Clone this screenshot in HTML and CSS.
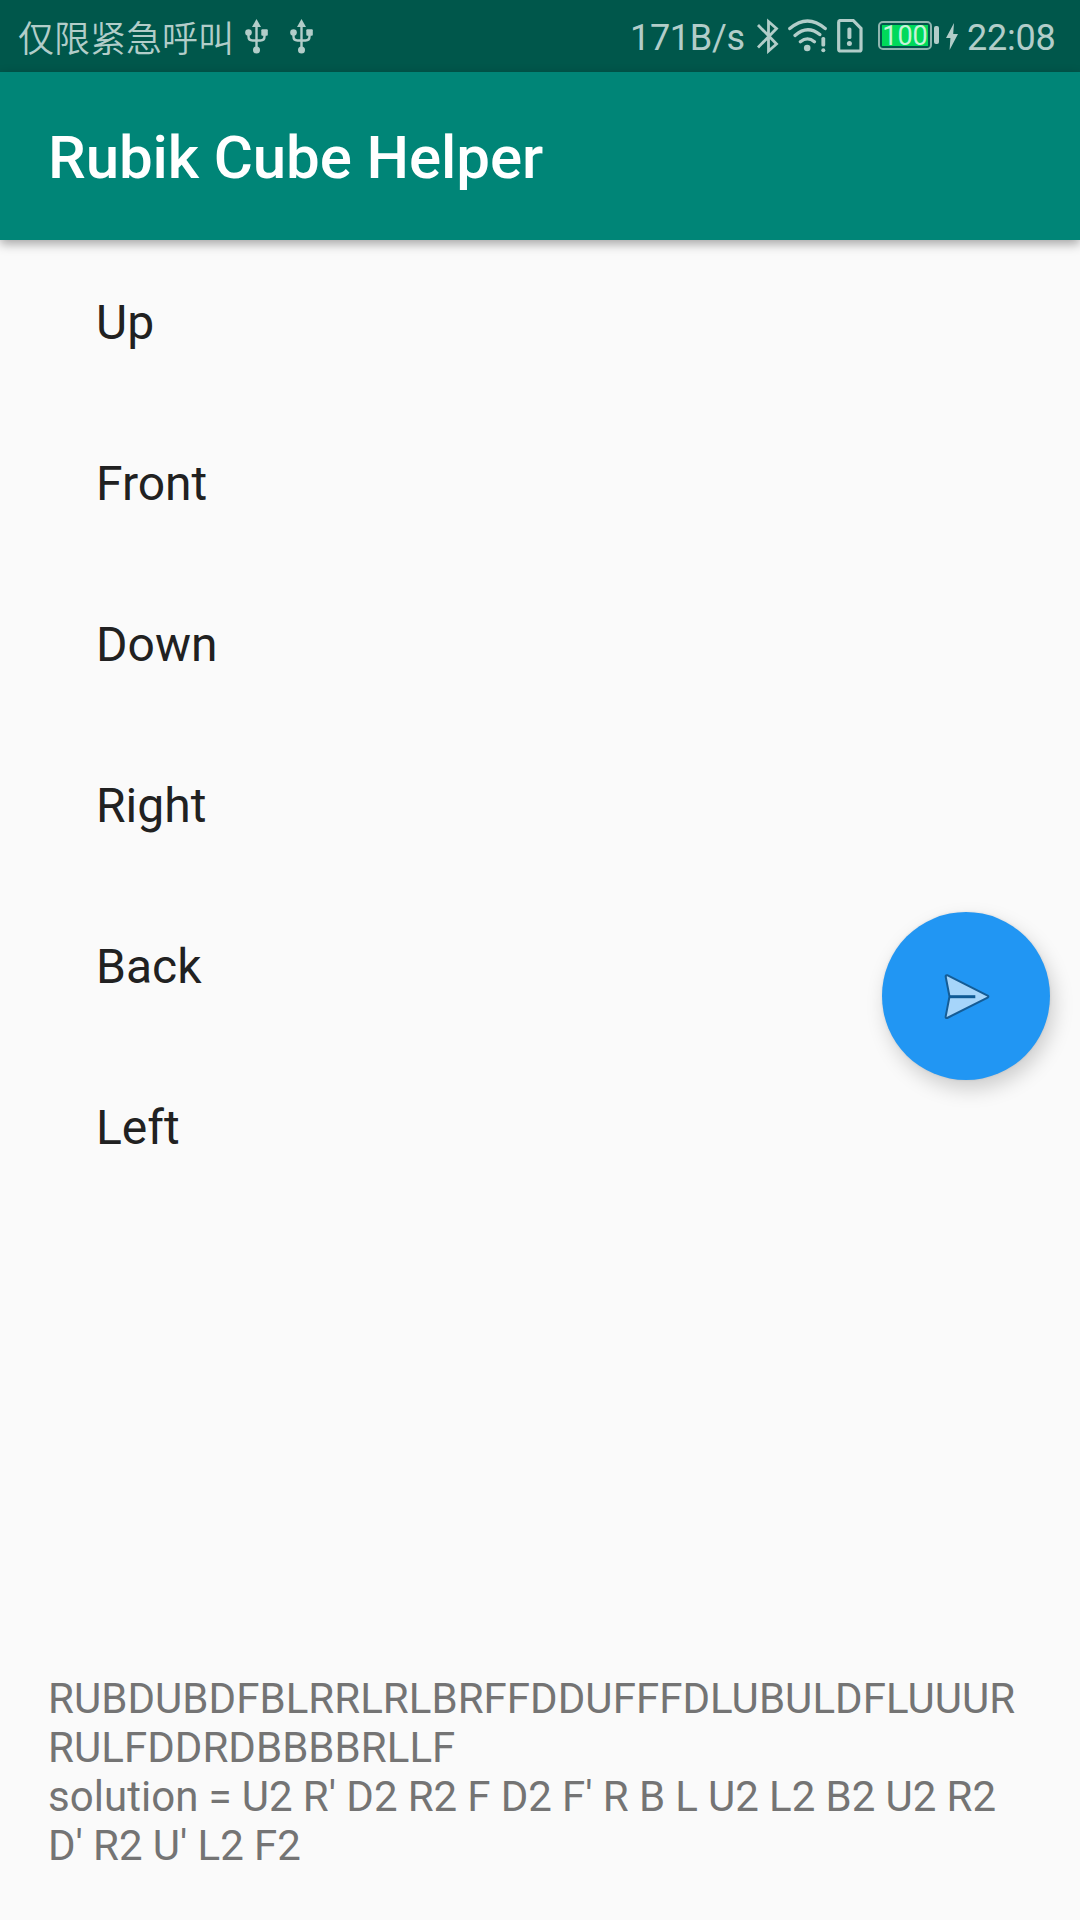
FILE: index.html
```html
<!DOCTYPE html>
<html lang="en">
<head>
<meta charset="utf-8">
<title>Rubik Cube Helper</title>
<link rel="stylesheet" href="styles.css">
</head>
<body>
<div class="screen">
  <div class="status-bar">
    <div class="status-left">
      <span class="carrier" lang="zh-CN">仅限紧急呼叫</span>
      <svg class="icon-usb" width="23" height="35" viewBox="0 0 23 35">
        <path d="M11.5 5v26M3.5 13v4.5q0 4 4 4h8q4 0 4-4V13" fill="none" stroke="currentColor" stroke-width="2.4"/>
        <path d="M11.5 0l4.5 8H7z"/>
        <circle cx="3.5" cy="13.5" r="3.3"/>
        <rect x="16.3" y="10.2" width="6.5" height="6.5" rx="1"/>
        <circle cx="11.5" cy="31" r="3.5"/>
      </svg>
      <svg class="icon-usb" width="23" height="35" viewBox="0 0 23 35">
        <path d="M11.5 5v26M3.5 13v4.5q0 4 4 4h8q4 0 4-4V13" fill="none" stroke="currentColor" stroke-width="2.4"/>
        <path d="M11.5 0l4.5 8H7z"/>
        <circle cx="3.5" cy="13.5" r="3.3"/>
        <rect x="16.3" y="10.2" width="6.5" height="6.5" rx="1"/>
        <circle cx="11.5" cy="31" r="3.5"/>
      </svg>
    </div>
    <div class="status-right">
      <span class="net-speed">171B/s</span>
      <svg class="icon-bluetooth" width="22" height="36" viewBox="0 0 22 36">
        <path d="M1 7L19.5 26 11.5 33V3.5l8 7L1 29.5" fill="none" stroke="currentColor" stroke-width="2.8"/>
      </svg>
      <svg class="icon-wifi" width="40" height="35" viewBox="0 0 40 35">
        <path d="M1.8 9.6Q19.5-5.6 37.2 9.6M7 16.4Q19.5 5.4 31.8 15.6M12.4 22.8Q19.5 17 26.4 22.8" fill="none" stroke="currentColor" stroke-width="3.3" stroke-linecap="round"/>
        <circle cx="19.2" cy="29" r="3.3"/>
        <rect x="33.4" y="18" width="3.8" height="9.5" rx="1.6"/>
        <circle cx="35.3" cy="31.3" r="2"/>
      </svg>
      <svg class="icon-sim" width="26" height="34" viewBox="0 0 26 34">
        <path d="M3.5 1.5h12.7l7.8 8v21q0 1.5-1.5 1.5H3.5Q1.7 32 1.7 30.2V3.3Q1.7 1.5 3.5 1.5z" fill="none" stroke="currentColor" stroke-width="3.2"/>
        <rect x="10.4" y="8.5" width="4" height="11.5" rx="1.6"/>
        <circle cx="12.4" cy="24.5" r="2.5"/>
      </svg>
      <div class="battery"><span class="battery-level">100</span></div>
      <div class="battery-tip"></div>
      <svg class="icon-bolt" width="12" height="27" viewBox="0 0 12 27">
        <path d="M8 0L0 15h4.4L3.6 27 12 11H7.2z"/>
      </svg>
      <span class="clock">22:08</span>
    </div>
  </div>
  <header class="app-bar"><h1 class="title">Rubik Cube Helper</h1></header>
  <main class="content">
    <ul class="faces">
      <li class="face">Up</li>
      <li class="face">Front</li>
      <li class="face">Down</li>
      <li class="face">Right</li>
      <li class="face">Back</li>
      <li class="face">Left</li>
    </ul>
    <p class="result">RUBDUBDFBLRRLRLBRFFDDUFFFDLUBULDFLUUUR<br>RULFDDRDBBBBRLLF<br>solution = U2 R' D2 R2 F D2 F' R B L U2 L2 B2 U2 R2<br>D' R2 U' L2 F2</p>
  </main>
  <button class="fab" type="button" aria-label="Solve">
    <svg width="48" height="48" viewBox="0 0 48 48">
      <path d="M3.2 2.2Q1.4 1.8 1.7 3.8L5.5 23.5 1.7 43.4Q1.4 45.4 3.2 45L43.6 24.6Q45.2 23.6 43.6 22.6z" fill="#a6d5fa" stroke="#155c95" stroke-width="2" stroke-linejoin="round"/>
      <path d="M5.5 23.7H31.3" stroke="#0f5a95" stroke-width="3"/>
    </svg>
  </button>
</div>
</body>
</html>
```
FILE: styles.css
```css
* { box-sizing: border-box; }

body {
  margin: 0;
  background: #fafafa;
  font-family: Roboto, "Noto Sans CJK SC", sans-serif;
}

.screen {
  position: relative;
  display: flex;
  flex-direction: column;
  width: 1080px;
  height: 1920px;
  overflow: hidden;
}

.status-bar {
  display: flex;
  justify-content: space-between;
  height: 72px;
  padding: 0 24px 0 18px;
  background: #00574b;
  color: #b2cdc9;
  font-size: 36px;
  line-height: 76px;
  white-space: nowrap;
}

.status-bar svg { display: block; fill: currentColor; flex: none; }

.status-left,
.status-right { display: flex; align-items: flex-start; }

.carrier {
  width: 227px;
  font-family: "Noto Sans CJK SC", sans-serif;
  font-weight: 350;
  line-height: 72px;
}

.icon-usb { margin: 19px 22px 0 0; }

.net-speed { width: 127px; letter-spacing: -0.3px; }
.icon-bluetooth { margin: 18px 9px 0 0; }
.icon-wifi { margin: 19px 9px 0 0; }
.icon-sim { margin: 19px 15px 0 0; }

.battery {
  width: 54px;
  height: 29px;
  margin-top: 21px;
  padding: 2px;
  border: 2px solid #8fb5af;
  border-radius: 5px;
}

.battery-level {
  display: block;
  height: 21px;
  background: #00d95a;
  color: #c5f3d8;
  font-size: 27px;
  line-height: 23px;
  text-align: center;
}

.battery-tip {
  width: 5px;
  height: 18px;
  margin: 26px 7px 0 2px;
  border-radius: 2px;
  background: #b2cdc9;
}

.icon-bolt { margin: 23px 9px 0 0; }

.clock { width: 89px; letter-spacing: -0.2px; }

.app-bar {
  z-index: 1;
  display: flex;
  align-items: center;
  height: 168px;
  padding: 4px 48px 0;
  background: #008577;
  box-shadow: 0 4px 10px rgba(0, 0, 0, 0.34);
}

.title {
  margin: 0;
  color: #fff;
  font-size: 60px;
  font-weight: 500;
  letter-spacing: -0.1px;
  line-height: 70px;
}

.content {
  display: flex;
  flex: 1;
  flex-direction: column;
  justify-content: space-between;
  padding: 2px 48px 50px;
}

.faces {
  margin: 0;
  padding: 0 48px;
  list-style: none;
}

.face {
  height: 161px;
  color: #212121;
  font-size: 48px;
  line-height: 161px;
}

.result {
  margin: 0;
  color: #747474;
  font-size: 42px;
  letter-spacing: 0.05px;
  line-height: 49px;
  white-space: nowrap;
  word-spacing: -0.36px;
}

.fab {
  position: absolute;
  top: 912px;
  right: 30px;
  display: flex;
  align-items: center;
  justify-content: center;
  width: 168px;
  height: 168px;
  padding: 0 0 0 3px;
  border: 0;
  border-radius: 50%;
  background: #2196f3;
  box-shadow: 4px 9px 20px rgba(0, 0, 0, 0.18), 0 0 3px rgba(0, 0, 0, 0.1);
}

.fab svg { margin-top: 1px; }
```
